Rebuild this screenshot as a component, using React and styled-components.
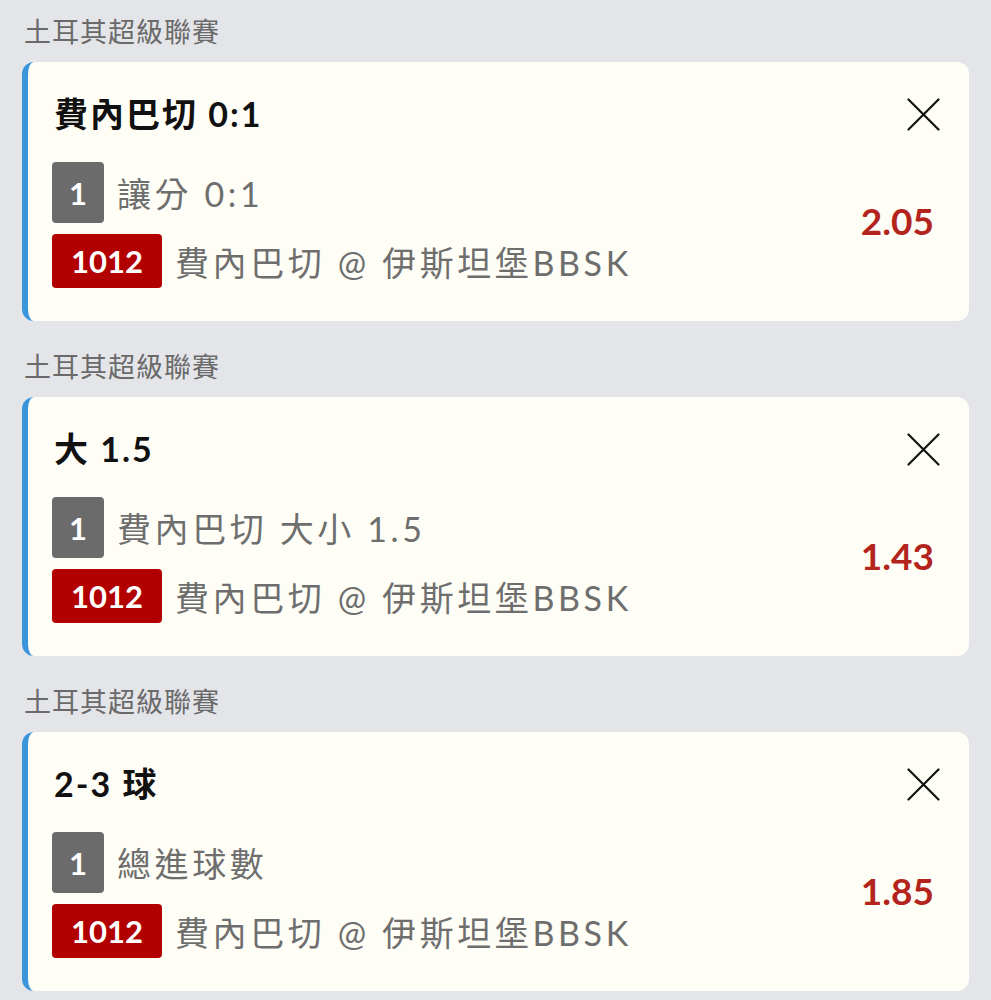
import React from "react";
import styled, { createGlobalStyle } from "styled-components";

const GlobalStyle = createGlobalStyle`
  html, body { margin: 0; padding: 0; background: #e4e5e9; }
  body { font-family: "Lato", "Noto Sans CJK TC", sans-serif; }
`;

const Page = styled.div`
  display: flex;
  flex-direction: column;
  gap: 28px;
  padding: 14px 22px 0 22px;
`;

const Section = styled.section`
  display: flex;
  flex-direction: column;
  gap: 12px;
`;

const League = styled.div`
  height: 36px;
  line-height: 36px;
  padding-left: 2px;
  font-size: 27px;
  letter-spacing: 1px;
  color: #6a6a6a;
`;

const Card = styled.div`
  display: flex;
  flex-direction: column;
  background: #fffef6;
  border-left: 6px solid #3a95db;
  border-radius: 12px;
  padding: 30px 29px 33px 24px;
  height: 259px;
  box-sizing: border-box;
`;

const Header = styled.div`
  display: flex;
  align-items: center;
  justify-content: space-between;
  height: 44px;
  padding-left: 2px;
`;

const Title = styled.div`
  font-size: 34px;
  font-weight: 700;
  letter-spacing: 2px;
  color: #111;
  line-height: 44px;
`;

const Close = styled.button`
  width: 33px;
  height: 33px;
  padding: 0;
  border: 0;
  background: none;
  display: flex;
  align-items: center;
  justify-content: center;
`;

const Body = styled.div`
  display: flex;
  align-items: center;
  justify-content: space-between;
  margin-top: 26px;
`;

const Lines = styled.div`
  display: flex;
  flex-direction: column;
  gap: 11px;
`;

const Line = styled.div`
  display: flex;
  align-items: center;
  gap: 13px;
`;

const Badge = styled.span`
  display: inline-flex;
  align-items: center;
  justify-content: center;
  box-sizing: border-box;
  border-radius: 4px;
  color: #fff;
  font-family: "Lato", sans-serif;
  font-weight: 700;
  font-size: 31px;
  width: ${(p) => (p.$wide ? "110px" : "52px")};
  height: ${(p) => (p.$wide ? "54px" : "61px")};
  background: ${(p) => (p.$red ? "#b20000" : "#6b6b6b")};
`;

const LineText = styled.span`
  font-size: 34px;
  letter-spacing: 3.6px;
  color: #6e6e6e;
  white-space: nowrap;
`;

const Odds = styled.div`
  font-family: "Lato", sans-serif;
  font-weight: 700;
  font-size: 37px;
  color: #b3241d;
  margin-right: 6px;
  margin-bottom: 10px;
`;

const XIcon = () => (
  <svg width="33" height="33" viewBox="0 0 33 33" fill="none" stroke="#111" strokeWidth="2.2" strokeLinecap="round">
    <path d="M1.5 1.5 L31.5 31.5 M31.5 1.5 L1.5 31.5" />
  </svg>
);

const bets = [
  { title: "費內巴切 0:1", market: "讓分 0:1", odds: "2.05" },
  { title: "大 1.5", market: "費內巴切 大小 1.5", odds: "1.43" },
  { title: "2-3 球", market: "總進球數", odds: "1.85" },
];

export default function App() {
  return (
    <>
      <GlobalStyle />
      <Page>
        {bets.map((b, i) => (
          <Section key={i}>
            <League>土耳其超級聯賽</League>
            <Card>
              <Header>
                <Title>{b.title}</Title>
                <Close aria-label="close"><XIcon /></Close>
              </Header>
              <Body>
                <Lines>
                  <Line>
                    <Badge>1</Badge>
                    <LineText>{b.market}</LineText>
                  </Line>
                  <Line>
                    <Badge $wide $red>1012</Badge>
                    <LineText>費內巴切 @ 伊斯坦堡BBSK</LineText>
                  </Line>
                </Lines>
                <Odds>{b.odds}</Odds>
              </Body>
            </Card>
          </Section>
        ))}
      </Page>
    </>
  );
}
